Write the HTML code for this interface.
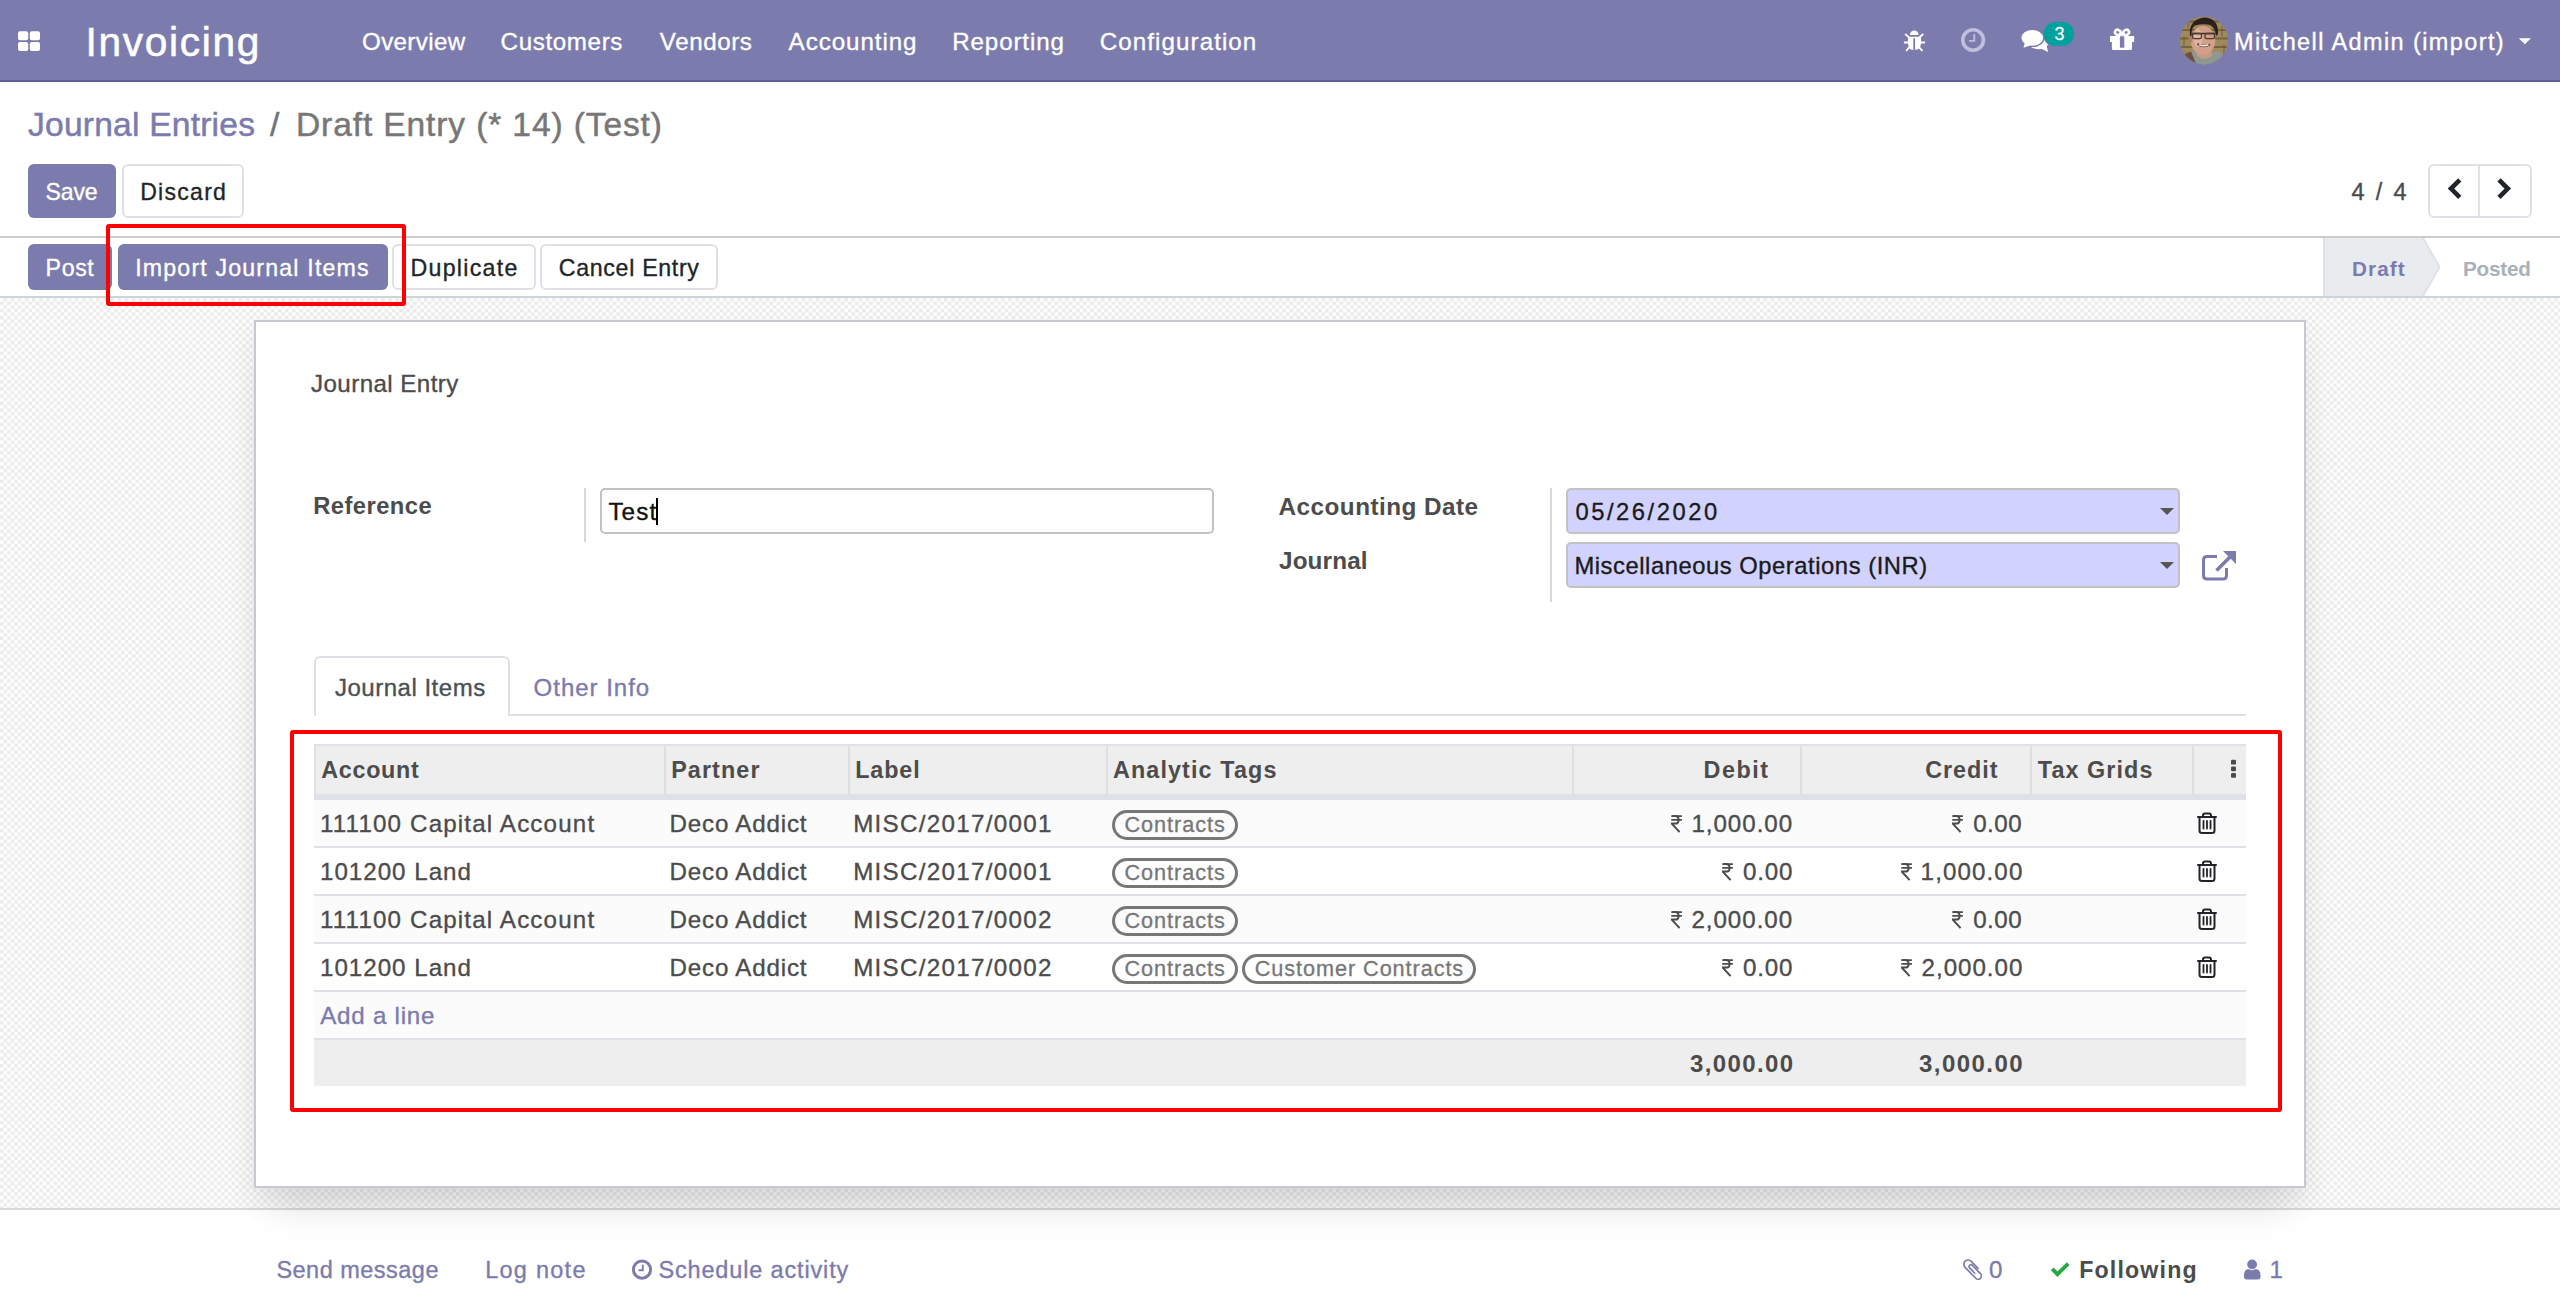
<!DOCTYPE html>
<html><head><meta charset="utf-8"><style>
html,body{margin:0;padding:0;width:2560px;height:1290px;overflow:hidden;background:#fff;}
body{position:relative;font-family:"Liberation Sans",sans-serif;}
.t{position:absolute;white-space:pre;}
.b{position:absolute;}
</style></head><body>
<div class="b" style="left:0px;top:0px;width:2560px;height:80px;background:#7C7BAD"></div>
<div class="b" style="left:0px;top:80px;width:2560px;height:2px;background:#5f5e97"></div>
<div class="b" style="left:0px;top:236px;width:2560px;height:2px;background:#cccccc"></div>
<div class="b" style="left:0px;top:296px;width:2560px;height:2px;background:#ced4da"></div>
<div class="b" style="left:0px;top:298px;width:2560px;height:910px;background-color:#f7f7f7;background-image:repeating-conic-gradient(#ececec 0 25%,#fdfdfd 0 50%);background-size:7.14px 7.14px"></div>
<div class="b" style="left:0px;top:1208px;width:2560px;height:2px;background:#d9d9d9"></div>
<div class="b" style="left:254px;top:320px;width:2052px;height:868px;background:#fff;border:2px solid #c8c8d3;box-sizing:border-box;box-shadow:0 40px 40px -20px rgba(0,0,0,.09),0 14px 28px 0 rgba(0,0,0,.07)"></div>
<svg class="b" style="left:17px;top:31px" width="24" height="20" viewBox="0 0 24 20"><rect x="1" y="0.3" width="10.2" height="9" rx="2" fill="#fff"/><rect x="12.8" y="0.3" width="10.2" height="9" rx="2" fill="#fff"/><rect x="1" y="10.9" width="10.2" height="9" rx="2" fill="#fff"/><rect x="12.8" y="10.9" width="10.2" height="9" rx="2" fill="#fff"/></svg>
<div class="t" style="left:85.60px;top:22.25px;font-size:40.60px;line-height:40.60px;letter-spacing:1.687px;color:#fff;-webkit-text-stroke:0.59px #fff;">Invoicing</div>
<div class="t" style="left:362.00px;top:30.00px;font-size:24.16px;line-height:24.16px;letter-spacing:0.357px;color:#fff;-webkit-text-stroke:0.35px #fff;">Overview</div>
<div class="t" style="left:500.60px;top:30.00px;font-size:24.16px;line-height:24.16px;letter-spacing:0.625px;color:#fff;-webkit-text-stroke:0.35px #fff;">Customers</div>
<div class="t" style="left:659.80px;top:30.00px;font-size:24.16px;line-height:24.16px;letter-spacing:0.583px;color:#fff;-webkit-text-stroke:0.35px #fff;">Vendors</div>
<div class="t" style="left:788.60px;top:30.00px;font-size:24.16px;line-height:24.16px;letter-spacing:0.933px;color:#fff;-webkit-text-stroke:0.35px #fff;">Accounting</div>
<div class="t" style="left:952.20px;top:30.00px;font-size:24.16px;line-height:24.16px;letter-spacing:0.875px;color:#fff;-webkit-text-stroke:0.35px #fff;">Reporting</div>
<div class="t" style="left:1099.80px;top:30.00px;font-size:24.16px;line-height:24.16px;letter-spacing:1.067px;color:#fff;-webkit-text-stroke:0.35px #fff;">Configuration</div>
<div class="t" style="left:2234.00px;top:30.90px;font-size:23.47px;line-height:23.47px;letter-spacing:1.409px;color:#fff;-webkit-text-stroke:0.34px #fff;">Mitchell Admin (import)</div>
<svg class="b" style="left:1898px;top:24px" width="34" height="32" viewBox="1898 24 34 32">
<path d="M1909.9 34.9 A4.4 4.3 0 0 1 1918.7 34.9 Z" fill="#fff"/>
<path d="M1908.3 36.7 H1920.9 Q1921.6 42 1920.6 45.5 Q1919.8 49.9 1915.1 49.9 V39 Q1915.1 38.1 1914.2 38.1 Q1913.3 38.1 1913.3 39 V49.9 Q1908.8 49.9 1908.4 45.5 Q1907.4 42 1908.3 36.7 Z" fill="#fff"/>
<path d="M1905.2 34 L1909.2 37.6 M1923.2 34 L1919.2 37.6 M1903.9 42.5 H1908.8 M1920.4 42.5 H1925 M1909.6 46.8 L1906.2 51 M1918.8 46.8 L1922.4 51" stroke="#fff" stroke-width="1.9" stroke-linecap="butt"/>
</svg>
<svg class="b" style="left:1956px;top:24px" width="34" height="32" viewBox="1956 24 34 32">
<circle cx="1973.1" cy="40" r="10.3" stroke="#c0bfdc" stroke-width="3.6" fill="none"/>
<path d="M1974.25 33.9 V40.9 H1969" stroke="#c0bfdc" stroke-width="1.9" fill="none"/>
</svg>
<svg class="b" style="left:2016px;top:18px" width="64" height="38" viewBox="2016 18 64 38">
<ellipse cx="2038.6" cy="41.2" rx="10.6" ry="8.1" fill="#fff"/>
<path d="M2041 48.5 L2048 52 L2046.5 45 Z" fill="#fff"/>
<ellipse cx="2032.3" cy="37.8" rx="12.3" ry="9.3" fill="#7C7BAD"/>
<path d="M2022.6 49.2 L2026 43 L2032 46.5 Z" fill="#7C7BAD"/>
<ellipse cx="2032.3" cy="37.8" rx="10.9" ry="7.9" fill="#fff"/>
<path d="M2024.8 43.2 L2023.4 47.7 L2030.3 45.6 Z" fill="#fff"/>
<rect x="2042.8" y="20.8" width="32.2" height="26.2" rx="13.1" fill="#7C7BAD"/>
<rect x="2043.8" y="21.8" width="30.2" height="24.2" rx="12.1" fill="#00A09D"/>
</svg>
<div class="t" style="left:2054.60px;top:26.40px;font-size:17.95px;line-height:17.95px;letter-spacing:0.000px;color:#fff;-webkit-text-stroke:0.26px #fff;">3</div>
<svg class="b" style="left:2104px;top:24px" width="36" height="32" viewBox="2104 24 36 32">
<ellipse cx="2117.8" cy="32.4" rx="2.9" ry="2.5" stroke="#fff" stroke-width="2.5" fill="none" transform="rotate(30 2117.8 32.4)"/>
<ellipse cx="2126.2" cy="32.4" rx="2.9" ry="2.5" stroke="#fff" stroke-width="2.5" fill="none" transform="rotate(-30 2126.2 32.4)"/>
<path d="M2119.5 35.8 H2124.5 L2122 33 Z" fill="#fff"/>
<path d="M2110 36 H2134.1 V42 H2132 V48.4 Q2132 49.9 2130.5 49.9 H2113.4 Q2111.9 49.9 2111.9 48.4 V42 H2110 Z" fill="#fff"/>
<rect x="2119.9" y="36.3" width="4.4" height="11.4" fill="#7C7BAD"/>
</svg>
<svg class="b" style="left:2176px;top:14px" width="56" height="52" viewBox="2176 14 56 52">
<defs><clipPath id="av"><circle cx="2204" cy="40.4" r="24"/></clipPath></defs>
<g clip-path="url(#av)">
<rect x="2176" y="14" width="56" height="52" fill="#a08b5c"/>
<path d="M2176 21.5 H2232 M2176 30 H2232 M2176 38.5 H2232 M2176 47 H2232 M2176 55.5 H2232" stroke="#6a5836" stroke-width="1.8" opacity="0.75"/>
<path d="M2188 18 V28 M2222 26 V36 M2184 36 V46 M2224 44 V54 M2186 52 V60" stroke="#6a5836" stroke-width="1.4" opacity="0.6"/>
<path d="M2176 66 Q2180 54 2192 51 L2204 56 L2216 51 Q2228 54 2232 66 Z" fill="#8f9793"/>
<path d="M2176 66 Q2180 55 2191 51.5 L2197 66 Z" fill="#6b4f3a"/>
<path d="M2197 50 Q2203 58 2212 50 V56 Q2204 62 2197 56 Z" fill="#c49a80"/>
<ellipse cx="2203" cy="40.5" rx="12.2" ry="14.5" fill="#d2a088"/>
<ellipse cx="2198" cy="38" rx="4.5" ry="9" fill="#e2bcaa" opacity="0.7"/>
<ellipse cx="2190.5" cy="39" rx="2" ry="3.5" fill="#b57d62"/>
<path d="M2190 36 Q2188 20 2204 17.5 Q2219 18 2218 34 L2216 36 Q2215 27 2210 25 Q2203 23.5 2195 25.5 Q2191 28 2191.5 36 Z" fill="#2a211c"/>
<path d="M2191.5 33.5 H2215.5" stroke="#3d302a" stroke-width="1.4"/>
<rect x="2192.5" y="33.5" width="9" height="5.2" rx="1.8" stroke="#4a3a32" stroke-width="1.3" fill="none"/>
<rect x="2205" y="33.5" width="9.5" height="5.2" rx="1.8" stroke="#4a3a32" stroke-width="1.3" fill="none"/>
<path d="M2197.5 44 Q2203.5 48.5 2210 44.5 Q2204 47 2197.5 44 Z" fill="#5a3a30" stroke="#5a3a30" stroke-width="1.6"/>
<path d="M2199 44.6 Q2203.5 47 2208.5 44.8" stroke="#f2e8e2" stroke-width="1.5" fill="none"/>
</g></svg>
<svg class="b" style="left:2516px;top:36px" width="18" height="10" viewBox="0 0 18 10"><path d="M2.8 2.2 H15 L8.9 8.3 Z" fill="#fff"/></svg>
<div class="t" style="left:28.00px;top:108.25px;font-size:33.55px;line-height:33.55px;letter-spacing:0.229px;color:#7C7BAD;-webkit-text-stroke:0.49px #7C7BAD;">Journal Entries</div>
<div class="t" style="left:270.00px;top:108.25px;font-size:33.55px;line-height:33.55px;letter-spacing:0.000px;color:#6c757d;-webkit-text-stroke:0.49px #6c757d;">/</div>
<div class="t" style="left:296.00px;top:108.25px;font-size:33.55px;line-height:33.55px;letter-spacing:0.879px;color:#777777;-webkit-text-stroke:0.49px #777777;">Draft Entry (* 14) (Test)</div>
<div class="b" style="left:28px;top:164px;width:88px;height:54px;background:#7C7BAD;border-radius:6px"></div>
<div class="t" style="left:45.60px;top:181.00px;font-size:23.06px;line-height:23.06px;letter-spacing:-0.200px;color:#fff;-webkit-text-stroke:0.33px #fff;">Save</div>
<div class="b" style="left:122px;top:164px;width:122px;height:54px;background:#fff;border:2px solid #dee2e6;border-radius:6px;box-sizing:border-box"></div>
<div class="t" style="left:140.20px;top:181.00px;font-size:23.06px;line-height:23.06px;letter-spacing:1.267px;color:#212529;-webkit-text-stroke:0.33px #212529;">Discard</div>
<div class="t" style="left:2351.40px;top:180.90px;font-size:23.47px;line-height:23.47px;letter-spacing:2.400px;color:#4c4c4c;-webkit-text-stroke:0.34px #4c4c4c;">4 / 4</div>
<div class="b" style="left:2428px;top:164px;width:104px;height:54px;background:#fff;border:2px solid #dee2e6;border-radius:6px;box-sizing:border-box"></div>
<div class="b" style="left:2478px;top:166px;width:2px;height:50px;background:#dee2e6"></div>
<svg class="b" style="left:2440px;top:172px" width="30" height="34" viewBox="2440 172 30 34"><path d="M2459.8 179.8 L2451 188.6 L2459.8 197.4" stroke="#212529" stroke-width="4.6" fill="none" stroke-linecap="butt" stroke-linejoin="miter"/></svg>
<svg class="b" style="left:2490px;top:172px" width="30" height="34" viewBox="2490 172 30 34"><path d="M2499 179.8 L2507.8 188.6 L2499 197.4" stroke="#212529" stroke-width="4.6" fill="none" stroke-linecap="butt" stroke-linejoin="miter"/></svg>
<div class="b" style="left:28px;top:244px;width:84px;height:46px;background:#7C7BAD;border-radius:6px"></div>
<div class="t" style="left:45.60px;top:257.30px;font-size:23.20px;line-height:23.20px;letter-spacing:0.600px;color:#fff;-webkit-text-stroke:0.34px #fff;">Post</div>
<div class="b" style="left:118px;top:244px;width:270px;height:46px;background:#7C7BAD;border-radius:6px"></div>
<div class="t" style="left:135.20px;top:257.30px;font-size:23.20px;line-height:23.20px;letter-spacing:1.163px;color:#fff;-webkit-text-stroke:0.34px #fff;">Import Journal Items</div>
<div class="b" style="left:392px;top:244px;width:144px;height:46px;background:#fff;border:2px solid #dee2e6;border-radius:6px;box-sizing:border-box"></div>
<div class="t" style="left:410.40px;top:256.70px;font-size:23.20px;line-height:23.20px;letter-spacing:1.300px;color:#212529;-webkit-text-stroke:0.34px #212529;">Duplicate</div>
<div class="b" style="left:540px;top:244px;width:178px;height:46px;background:#fff;border:2px solid #dee2e6;border-radius:6px;box-sizing:border-box"></div>
<div class="t" style="left:558.80px;top:256.70px;font-size:23.20px;line-height:23.20px;letter-spacing:0.673px;color:#212529;-webkit-text-stroke:0.34px #212529;">Cancel Entry</div>
<svg class="b" style="left:2322px;top:238px" width="238" height="58" viewBox="0 0 238 58"><path d="M2 0 H101 L117.5 29 L101 58 H2 Z" fill="#e9ecef"/><path d="M2 0 V58" stroke="#dee2e6" stroke-width="2"/><path d="M101 0 L117.5 29 L101 58" stroke="#dee2e6" stroke-width="2" fill="none"/></svg>
<div class="t" style="left:2352.00px;top:259.00px;font-size:20.71px;line-height:20.71px;letter-spacing:1.100px;color:#7C7BAD;font-weight:bold;">Draft</div>
<div class="t" style="left:2463.00px;top:259.00px;font-size:20.71px;line-height:20.71px;letter-spacing:-0.240px;color:#a9b1ba;font-weight:bold;">Posted</div>
<div class="b" style="left:106px;top:224px;width:300px;height:82px;border:4px solid #ff0000;box-sizing:border-box;border-radius:3px"></div>
<div class="t" style="left:311.00px;top:372.25px;font-size:24.16px;line-height:24.16px;letter-spacing:0.417px;color:#4c4c4c;-webkit-text-stroke:0.35px #4c4c4c;">Journal Entry</div>
<div class="t" style="left:313.20px;top:493.60px;font-size:23.75px;line-height:23.75px;letter-spacing:0.450px;color:#4c4c4c;font-weight:bold;">Reference</div>
<div class="b" style="left:584px;top:488px;width:2px;height:54px;background:#d8d8d8"></div>
<div class="b" style="left:600px;top:488px;width:614px;height:46px;background:#fff;border:2px solid #c2c2c2;border-radius:5px;box-sizing:border-box"></div>
<div class="t" style="left:608.40px;top:500.30px;font-size:24.30px;line-height:24.30px;letter-spacing:1.067px;color:#111;-webkit-text-stroke:0.35px #111;">Test</div>
<div class="b" style="left:656px;top:498px;width:2px;height:27px;background:#000"></div>
<div class="t" style="left:1278.60px;top:494.50px;font-size:24.30px;line-height:24.30px;letter-spacing:0.464px;color:#4c4c4c;font-weight:bold;">Accounting Date</div>
<div class="t" style="left:1279.00px;top:548.50px;font-size:24.30px;line-height:24.30px;letter-spacing:0.133px;color:#4c4c4c;font-weight:bold;">Journal</div>
<div class="b" style="left:1550px;top:488px;width:2px;height:114px;background:#d8d8d8"></div>
<div class="b" style="left:1566px;top:488px;width:614px;height:46px;background:#d2d2ff;border:2px solid #c2c2c2;border-radius:5px;box-sizing:border-box"></div>
<div class="b" style="left:1566px;top:542px;width:614px;height:46px;background:#d2d2ff;border:2px solid #c2c2c2;border-radius:5px;box-sizing:border-box"></div>
<div class="t" style="left:1575.40px;top:499.80px;font-size:23.75px;line-height:23.75px;letter-spacing:2.556px;color:#1a1a1a;-webkit-text-stroke:0.34px #1a1a1a;">05/26/2020</div>
<div class="t" style="left:1574.40px;top:553.75px;font-size:23.75px;line-height:23.75px;letter-spacing:0.559px;color:#1a1a1a;-webkit-text-stroke:0.34px #1a1a1a;">Miscellaneous Operations (INR)</div>
<svg class="b" style="left:2158px;top:506px" width="18" height="10" viewBox="0 0 18 10"><path d="M2 2 H16 L9 9 Z" fill="#555"/></svg>
<svg class="b" style="left:2158px;top:560px" width="18" height="10" viewBox="0 0 18 10"><path d="M2 2 H16 L9 9 Z" fill="#555"/></svg>
<svg class="b" style="left:2200px;top:548px" width="40" height="34" viewBox="0 0 40 34"><path d="M17 8.5 H7 Q3.5 8.5 3.5 12 V27.5 Q3.5 31 7 31 H23 Q26.5 31 26.5 27.5 V20" stroke="#7C7BAD" stroke-width="3" fill="none"/><path d="M23 3 H36 V16 Z" fill="#7C7BAD"/><path d="M31.5 7.5 L16.5 22.5" stroke="#7C7BAD" stroke-width="3.6"/></svg>
<div class="b" style="left:509px;top:714px;width:1737px;height:2px;background:#dee2e6"></div>
<div class="b" style="left:314px;top:656px;width:196px;height:60px;background:#fff;border:2px solid #dee2e6;border-bottom:none;border-radius:6px 6px 0 0;box-sizing:border-box"></div>
<div class="t" style="left:335.00px;top:675.50px;font-size:24.03px;line-height:24.03px;letter-spacing:0.500px;color:#495057;-webkit-text-stroke:0.35px #495057;">Journal Items</div>
<div class="t" style="left:533.60px;top:675.50px;font-size:24.03px;line-height:24.03px;letter-spacing:0.978px;color:#7C7BAD;-webkit-text-stroke:0.35px #7C7BAD;">Other Info</div>
<div class="b" style="left:314px;top:744px;width:1932px;height:2px;background:#dee2e6"></div>
<div class="b" style="left:314px;top:746px;width:1932px;height:48px;background:#eeeeee"></div>
<div class="b" style="left:314px;top:746px;width:2px;height:48px;background:#dee2e6"></div>
<div class="b" style="left:314px;top:794px;width:1932px;height:6px;background:#dee2e6"></div>
<div class="b" style="left:664px;top:746px;width:2px;height:48px;background:#dfdfdf"></div>
<div class="b" style="left:848px;top:746px;width:2px;height:48px;background:#dfdfdf"></div>
<div class="b" style="left:1106px;top:746px;width:2px;height:48px;background:#dfdfdf"></div>
<div class="b" style="left:1572px;top:746px;width:2px;height:48px;background:#dfdfdf"></div>
<div class="b" style="left:1800px;top:746px;width:2px;height:48px;background:#dfdfdf"></div>
<div class="b" style="left:2030px;top:746px;width:2px;height:48px;background:#dfdfdf"></div>
<div class="b" style="left:2192px;top:746px;width:2px;height:48px;background:#dfdfdf"></div>
<div class="t" style="left:321.20px;top:758.80px;font-size:23.34px;line-height:23.34px;letter-spacing:0.717px;color:#4c4c4c;font-weight:bold;">Account</div>
<div class="t" style="left:671.20px;top:758.80px;font-size:23.34px;line-height:23.34px;letter-spacing:1.100px;color:#4c4c4c;font-weight:bold;">Partner</div>
<div class="t" style="left:855.20px;top:758.80px;font-size:23.34px;line-height:23.34px;letter-spacing:0.900px;color:#4c4c4c;font-weight:bold;">Label</div>
<div class="t" style="left:1113.00px;top:758.80px;font-size:23.34px;line-height:23.34px;letter-spacing:1.117px;color:#4c4c4c;font-weight:bold;">Analytic Tags</div>
<div class="t" style="left:1703.60px;top:758.80px;font-size:23.34px;line-height:23.34px;letter-spacing:1.550px;color:#4c4c4c;font-weight:bold;">Debit</div>
<div class="t" style="left:1925.20px;top:758.80px;font-size:23.34px;line-height:23.34px;letter-spacing:1.000px;color:#4c4c4c;font-weight:bold;">Credit</div>
<div class="t" style="left:2037.80px;top:758.80px;font-size:23.34px;line-height:23.34px;letter-spacing:1.087px;color:#4c4c4c;font-weight:bold;">Tax Grids</div>
<svg class="b" style="left:2230px;top:759px" width="8" height="20" viewBox="0 0 8 20"><rect x="1" y="0.8" width="5" height="4.8" rx="1.2" fill="#4c4c4c"/><rect x="1" y="7.4" width="5" height="4.8" rx="1.2" fill="#4c4c4c"/><rect x="1" y="14" width="5" height="4.8" rx="1.2" fill="#4c4c4c"/></svg>
<div class="b" style="left:314px;top:800px;width:1932px;height:46px;background:#fbfbfb"></div>
<div class="b" style="left:314px;top:846px;width:1932px;height:2px;background:#dee2e6"></div>
<div class="t" style="left:320.00px;top:812.00px;font-size:24.16px;line-height:24.16px;letter-spacing:1.157px;color:#4c4c4c;-webkit-text-stroke:0.35px #4c4c4c;">111100 Capital Account</div>
<div class="t" style="left:669.60px;top:812.00px;font-size:24.16px;line-height:24.16px;letter-spacing:0.800px;color:#4c4c4c;-webkit-text-stroke:0.35px #4c4c4c;">Deco Addict</div>
<div class="t" style="left:853.20px;top:812.00px;font-size:24.16px;line-height:24.16px;letter-spacing:1.300px;color:#4c4c4c;-webkit-text-stroke:0.35px #4c4c4c;">MISC/2017/0001</div>
<div class="b" style="left:1112px;top:810px;width:126px;height:30px;border:3px solid #777;border-radius:15px;box-sizing:border-box"></div>
<div class="t" style="left:1124.40px;top:813.80px;font-size:21.68px;line-height:21.68px;letter-spacing:0.975px;color:#777777;-webkit-text-stroke:0.31px #777777;">Contracts</div>
<div class="t" style="left:1691.40px;top:812.00px;font-size:24.16px;line-height:24.16px;letter-spacing:0.957px;color:#4c4c4c;-webkit-text-stroke:0.35px #4c4c4c;">1,000.00</div>
<svg class="b" style="left:1670.7px;top:814.5px" width="12" height="18" viewBox="0 0 12 18"><path d="M0.3 1.1 H10.9 M0.3 4.9 H10.9" stroke="#4c4c4c" stroke-width="1.9"/><path d="M1.3 1.1 H4 Q7.6 1.1 7.6 4.9 Q7.6 8.6 4 8.6 H0.8 L8.6 17.2" stroke="#4c4c4c" stroke-width="2" fill="none" stroke-linejoin="miter"/></svg>
<div class="t" style="left:1973.20px;top:812.00px;font-size:24.16px;line-height:24.16px;letter-spacing:0.500px;color:#4c4c4c;-webkit-text-stroke:0.35px #4c4c4c;">0.00</div>
<svg class="b" style="left:1951.9px;top:814.5px" width="12" height="18" viewBox="0 0 12 18"><path d="M0.3 1.1 H10.9 M0.3 4.9 H10.9" stroke="#4c4c4c" stroke-width="1.9"/><path d="M1.3 1.1 H4 Q7.6 1.1 7.6 4.9 Q7.6 8.6 4 8.6 H0.8 L8.6 17.2" stroke="#4c4c4c" stroke-width="2" fill="none" stroke-linejoin="miter"/></svg>
<svg class="b" style="left:2196px;top:812px" width="22" height="23" viewBox="0 0 22 23"><path d="M2 5 H20" stroke="#212529" stroke-width="2" stroke-linecap="round"/><path d="M7 5 V3.5 Q7 1.5 9 1.5 H13 Q15 1.5 15 3.5 V5" stroke="#212529" stroke-width="2" fill="none"/><path d="M3.5 5 V18.5 Q3.5 21 6 21 H16 Q18.5 21 18.5 18.5 V5" stroke="#212529" stroke-width="2" fill="none"/><path d="M7.5 9 V16.5 M11 9 V16.5 M14.5 9 V16.5" stroke="#212529" stroke-width="1.8" stroke-linecap="round"/></svg>
<div class="b" style="left:314px;top:848px;width:1932px;height:46px;background:#ffffff"></div>
<div class="b" style="left:314px;top:894px;width:1932px;height:2px;background:#dee2e6"></div>
<div class="t" style="left:320.00px;top:860.00px;font-size:24.16px;line-height:24.16px;letter-spacing:0.990px;color:#4c4c4c;-webkit-text-stroke:0.35px #4c4c4c;">101200 Land</div>
<div class="t" style="left:669.60px;top:860.00px;font-size:24.16px;line-height:24.16px;letter-spacing:0.800px;color:#4c4c4c;-webkit-text-stroke:0.35px #4c4c4c;">Deco Addict</div>
<div class="t" style="left:853.20px;top:860.00px;font-size:24.16px;line-height:24.16px;letter-spacing:1.300px;color:#4c4c4c;-webkit-text-stroke:0.35px #4c4c4c;">MISC/2017/0001</div>
<div class="b" style="left:1112px;top:858px;width:126px;height:30px;border:3px solid #777;border-radius:15px;box-sizing:border-box"></div>
<div class="t" style="left:1124.40px;top:861.80px;font-size:21.68px;line-height:21.68px;letter-spacing:0.975px;color:#777777;-webkit-text-stroke:0.31px #777777;">Contracts</div>
<div class="t" style="left:1743.00px;top:860.00px;font-size:24.16px;line-height:24.16px;letter-spacing:0.833px;color:#4c4c4c;-webkit-text-stroke:0.35px #4c4c4c;">0.00</div>
<svg class="b" style="left:1722.1px;top:862.5px" width="12" height="18" viewBox="0 0 12 18"><path d="M0.3 1.1 H10.9 M0.3 4.9 H10.9" stroke="#4c4c4c" stroke-width="1.9"/><path d="M1.3 1.1 H4 Q7.6 1.1 7.6 4.9 Q7.6 8.6 4 8.6 H0.8 L8.6 17.2" stroke="#4c4c4c" stroke-width="2" fill="none" stroke-linejoin="miter"/></svg>
<div class="t" style="left:1920.60px;top:860.00px;font-size:24.16px;line-height:24.16px;letter-spacing:1.100px;color:#4c4c4c;-webkit-text-stroke:0.35px #4c4c4c;">1,000.00</div>
<svg class="b" style="left:1900.5px;top:862.5px" width="12" height="18" viewBox="0 0 12 18"><path d="M0.3 1.1 H10.9 M0.3 4.9 H10.9" stroke="#4c4c4c" stroke-width="1.9"/><path d="M1.3 1.1 H4 Q7.6 1.1 7.6 4.9 Q7.6 8.6 4 8.6 H0.8 L8.6 17.2" stroke="#4c4c4c" stroke-width="2" fill="none" stroke-linejoin="miter"/></svg>
<svg class="b" style="left:2196px;top:860px" width="22" height="23" viewBox="0 0 22 23"><path d="M2 5 H20" stroke="#212529" stroke-width="2" stroke-linecap="round"/><path d="M7 5 V3.5 Q7 1.5 9 1.5 H13 Q15 1.5 15 3.5 V5" stroke="#212529" stroke-width="2" fill="none"/><path d="M3.5 5 V18.5 Q3.5 21 6 21 H16 Q18.5 21 18.5 18.5 V5" stroke="#212529" stroke-width="2" fill="none"/><path d="M7.5 9 V16.5 M11 9 V16.5 M14.5 9 V16.5" stroke="#212529" stroke-width="1.8" stroke-linecap="round"/></svg>
<div class="b" style="left:314px;top:896px;width:1932px;height:46px;background:#fbfbfb"></div>
<div class="b" style="left:314px;top:942px;width:1932px;height:2px;background:#dee2e6"></div>
<div class="t" style="left:320.00px;top:908.00px;font-size:24.16px;line-height:24.16px;letter-spacing:1.157px;color:#4c4c4c;-webkit-text-stroke:0.35px #4c4c4c;">111100 Capital Account</div>
<div class="t" style="left:669.60px;top:908.00px;font-size:24.16px;line-height:24.16px;letter-spacing:0.800px;color:#4c4c4c;-webkit-text-stroke:0.35px #4c4c4c;">Deco Addict</div>
<div class="t" style="left:853.20px;top:908.00px;font-size:24.16px;line-height:24.16px;letter-spacing:1.300px;color:#4c4c4c;-webkit-text-stroke:0.35px #4c4c4c;">MISC/2017/0002</div>
<div class="b" style="left:1112px;top:906px;width:126px;height:30px;border:3px solid #777;border-radius:15px;box-sizing:border-box"></div>
<div class="t" style="left:1124.40px;top:909.80px;font-size:21.68px;line-height:21.68px;letter-spacing:0.975px;color:#777777;-webkit-text-stroke:0.31px #777777;">Contracts</div>
<div class="t" style="left:1691.40px;top:908.00px;font-size:24.16px;line-height:24.16px;letter-spacing:0.957px;color:#4c4c4c;-webkit-text-stroke:0.35px #4c4c4c;">2,000.00</div>
<svg class="b" style="left:1670.7px;top:910.5px" width="12" height="18" viewBox="0 0 12 18"><path d="M0.3 1.1 H10.9 M0.3 4.9 H10.9" stroke="#4c4c4c" stroke-width="1.9"/><path d="M1.3 1.1 H4 Q7.6 1.1 7.6 4.9 Q7.6 8.6 4 8.6 H0.8 L8.6 17.2" stroke="#4c4c4c" stroke-width="2" fill="none" stroke-linejoin="miter"/></svg>
<div class="t" style="left:1973.20px;top:908.00px;font-size:24.16px;line-height:24.16px;letter-spacing:0.500px;color:#4c4c4c;-webkit-text-stroke:0.35px #4c4c4c;">0.00</div>
<svg class="b" style="left:1951.9px;top:910.5px" width="12" height="18" viewBox="0 0 12 18"><path d="M0.3 1.1 H10.9 M0.3 4.9 H10.9" stroke="#4c4c4c" stroke-width="1.9"/><path d="M1.3 1.1 H4 Q7.6 1.1 7.6 4.9 Q7.6 8.6 4 8.6 H0.8 L8.6 17.2" stroke="#4c4c4c" stroke-width="2" fill="none" stroke-linejoin="miter"/></svg>
<svg class="b" style="left:2196px;top:908px" width="22" height="23" viewBox="0 0 22 23"><path d="M2 5 H20" stroke="#212529" stroke-width="2" stroke-linecap="round"/><path d="M7 5 V3.5 Q7 1.5 9 1.5 H13 Q15 1.5 15 3.5 V5" stroke="#212529" stroke-width="2" fill="none"/><path d="M3.5 5 V18.5 Q3.5 21 6 21 H16 Q18.5 21 18.5 18.5 V5" stroke="#212529" stroke-width="2" fill="none"/><path d="M7.5 9 V16.5 M11 9 V16.5 M14.5 9 V16.5" stroke="#212529" stroke-width="1.8" stroke-linecap="round"/></svg>
<div class="b" style="left:314px;top:944px;width:1932px;height:46px;background:#ffffff"></div>
<div class="b" style="left:314px;top:990px;width:1932px;height:2px;background:#dee2e6"></div>
<div class="t" style="left:320.00px;top:956.00px;font-size:24.16px;line-height:24.16px;letter-spacing:0.990px;color:#4c4c4c;-webkit-text-stroke:0.35px #4c4c4c;">101200 Land</div>
<div class="t" style="left:669.60px;top:956.00px;font-size:24.16px;line-height:24.16px;letter-spacing:0.800px;color:#4c4c4c;-webkit-text-stroke:0.35px #4c4c4c;">Deco Addict</div>
<div class="t" style="left:853.20px;top:956.00px;font-size:24.16px;line-height:24.16px;letter-spacing:1.300px;color:#4c4c4c;-webkit-text-stroke:0.35px #4c4c4c;">MISC/2017/0002</div>
<div class="b" style="left:1112px;top:954px;width:126px;height:30px;border:3px solid #777;border-radius:15px;box-sizing:border-box"></div>
<div class="t" style="left:1124.40px;top:957.80px;font-size:21.68px;line-height:21.68px;letter-spacing:0.975px;color:#777777;-webkit-text-stroke:0.31px #777777;">Contracts</div>
<div class="b" style="left:1242px;top:954px;width:234px;height:30px;border:3px solid #777;border-radius:15px;box-sizing:border-box"></div>
<div class="t" style="left:1254.80px;top:957.80px;font-size:21.68px;line-height:21.68px;letter-spacing:0.924px;color:#777777;-webkit-text-stroke:0.31px #777777;">Customer Contracts</div>
<div class="t" style="left:1743.00px;top:956.00px;font-size:24.16px;line-height:24.16px;letter-spacing:0.833px;color:#4c4c4c;-webkit-text-stroke:0.35px #4c4c4c;">0.00</div>
<svg class="b" style="left:1722.1px;top:958.5px" width="12" height="18" viewBox="0 0 12 18"><path d="M0.3 1.1 H10.9 M0.3 4.9 H10.9" stroke="#4c4c4c" stroke-width="1.9"/><path d="M1.3 1.1 H4 Q7.6 1.1 7.6 4.9 Q7.6 8.6 4 8.6 H0.8 L8.6 17.2" stroke="#4c4c4c" stroke-width="2" fill="none" stroke-linejoin="miter"/></svg>
<div class="t" style="left:1921.60px;top:956.00px;font-size:24.16px;line-height:24.16px;letter-spacing:0.957px;color:#4c4c4c;-webkit-text-stroke:0.35px #4c4c4c;">2,000.00</div>
<svg class="b" style="left:1900.5px;top:958.5px" width="12" height="18" viewBox="0 0 12 18"><path d="M0.3 1.1 H10.9 M0.3 4.9 H10.9" stroke="#4c4c4c" stroke-width="1.9"/><path d="M1.3 1.1 H4 Q7.6 1.1 7.6 4.9 Q7.6 8.6 4 8.6 H0.8 L8.6 17.2" stroke="#4c4c4c" stroke-width="2" fill="none" stroke-linejoin="miter"/></svg>
<svg class="b" style="left:2196px;top:956px" width="22" height="23" viewBox="0 0 22 23"><path d="M2 5 H20" stroke="#212529" stroke-width="2" stroke-linecap="round"/><path d="M7 5 V3.5 Q7 1.5 9 1.5 H13 Q15 1.5 15 3.5 V5" stroke="#212529" stroke-width="2" fill="none"/><path d="M3.5 5 V18.5 Q3.5 21 6 21 H16 Q18.5 21 18.5 18.5 V5" stroke="#212529" stroke-width="2" fill="none"/><path d="M7.5 9 V16.5 M11 9 V16.5 M14.5 9 V16.5" stroke="#212529" stroke-width="1.8" stroke-linecap="round"/></svg>
<div class="b" style="left:314px;top:992px;width:1932px;height:46px;background:#fbfbfb"></div>
<div class="b" style="left:314px;top:1038px;width:1932px;height:2px;background:#dee2e6"></div>
<div class="t" style="left:320.20px;top:1004.10px;font-size:24.16px;line-height:24.16px;letter-spacing:0.756px;color:#7C7BAD;-webkit-text-stroke:0.35px #7C7BAD;">Add a line</div>
<div class="b" style="left:314px;top:1040px;width:1932px;height:46px;background:#eeeeee"></div>
<div class="t" style="left:1690.00px;top:1052.20px;font-size:24.03px;line-height:24.03px;letter-spacing:1.357px;color:#4c4c4c;font-weight:bold;">3,000.00</div>
<div class="t" style="left:1919.00px;top:1052.20px;font-size:24.03px;line-height:24.03px;letter-spacing:1.443px;color:#4c4c4c;font-weight:bold;">3,000.00</div>
<div class="b" style="left:290px;top:730px;width:1992px;height:382px;border:4px solid #ff0000;box-sizing:border-box;border-radius:3px"></div>
<div class="t" style="left:276.40px;top:1258.50px;font-size:23.47px;line-height:23.47px;letter-spacing:0.500px;color:#7C7BAD;-webkit-text-stroke:0.34px #7C7BAD;">Send message</div>
<div class="t" style="left:485.20px;top:1258.50px;font-size:23.47px;line-height:23.47px;letter-spacing:1.271px;color:#7C7BAD;-webkit-text-stroke:0.34px #7C7BAD;">Log note</div>
<svg class="b" style="left:631px;top:1259px" width="22" height="21" viewBox="0 0 22 21"><circle cx="11" cy="10.6" r="8.6" stroke="#7C7BAD" stroke-width="3" fill="none"/><path d="M11.8 5.8 V11.2 H7.6" stroke="#7C7BAD" stroke-width="1.9" fill="none"/></svg>
<div class="t" style="left:658.40px;top:1258.50px;font-size:23.47px;line-height:23.47px;letter-spacing:0.863px;color:#7C7BAD;-webkit-text-stroke:0.34px #7C7BAD;">Schedule activity</div>
<svg class="b" style="left:1958px;top:1254px" width="30" height="30" viewBox="1958 1254 30 30"><path transform="translate(1968.2 1264.3) rotate(-44)" d="M4.3 10.5 V0 A4.3 4.3 0 0 0 -4.3 0 V15.2 A3.3 3.3 0 0 0 2.3 15.2 V3.6 A1.9 1.9 0 0 0 -1.5 3.6 V11.7" stroke="#7C7BAD" stroke-width="1.7" fill="none"/></svg>
<div class="t" style="left:1989.00px;top:1257.80px;font-size:24.16px;line-height:24.16px;letter-spacing:0.000px;color:#7C7BAD;-webkit-text-stroke:0.35px #7C7BAD;">0</div>
<svg class="b" style="left:2049px;top:1260px" width="24" height="20" viewBox="2049 1260 24 20"><path d="M2052.2 1268.8 L2057.5 1274.2 L2068.2 1263.6" stroke="#28a745" stroke-width="3.9" fill="none" stroke-linecap="butt"/></svg>
<div class="t" style="left:2079.20px;top:1258.80px;font-size:23.20px;line-height:23.20px;letter-spacing:1.162px;color:#4c4c4c;font-weight:bold;">Following</div>
<svg class="b" style="left:2243px;top:1259px" width="19" height="21" viewBox="0 0 19 21"><circle cx="9.1" cy="5.4" r="4.9" fill="#7C7BAD"/><path d="M0.9 17.3 Q0.9 10.3 5.4 10.1 Q9.1 12.4 12.8 10.1 Q17.6 10.3 17.6 17.3 Q17.6 20.6 14.6 20.6 H3.9 Q0.9 20.6 0.9 17.3 Z" fill="#7C7BAD"/></svg>
<div class="t" style="left:2269.40px;top:1257.80px;font-size:24.16px;line-height:24.16px;letter-spacing:0.000px;color:#7C7BAD;-webkit-text-stroke:0.35px #7C7BAD;">1</div>
</body></html>
